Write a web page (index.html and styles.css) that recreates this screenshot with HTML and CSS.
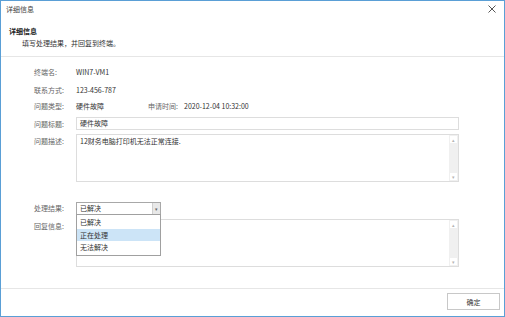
FILE: index.html
```html
<!DOCTYPE html>
<html lang="zh-CN">
<head>
    <meta charset="UTF-8">
    <title>详细信息</title>
    <link rel="stylesheet" href="styles.css">
</head>
<body>
    <div class="window">
        <div class="title-bar">
            <span class="title-text">详细信息</span>
            <svg class="close-icon" width="8" height="8" viewBox="0 0 8 8" fill="none" stroke="#555" stroke-width="1">
                <path d="M0.5 0.5L7.5 7.5M7.5 0.5L0.5 7.5"/>
            </svg>
        </div>

        <div class="header">
            <div class="header-title">详细信息</div>
            <div class="header-sub">填写处理结果，并回复到终端。</div>
        </div>

        <div class="form">
            <div class="row row-1">
                <span class="label">终端名:</span>
                <span class="value">WIN7-VM1</span>
            </div>
            <div class="row row-2">
                <span class="label">联系方式:</span>
                <span class="value">123-456-787</span>
            </div>
            <div class="row row-3">
                <span class="label">问题类型:</span>
                <span class="value value-short">硬件故障</span>
                <span class="label label-short">申请时间:</span>
                <span class="value">2020-12-04 10:32:00</span>
            </div>
            <div class="row row-4">
                <span class="label">问题标题:</span>
                <div class="input">硬件故障</div>
            </div>
            <div class="row row-5 row-top">
                <span class="label">问题描述:</span>
                <div class="textarea">
                    <div class="textarea-text">12财务电脑打印机无法正常连接.</div>
                    <div class="scrollbar">
                        <span class="scroll-btn">▴</span>
                        <span class="scroll-btn">▾</span>
                    </div>
                </div>
            </div>
            <div class="row row-6">
                <span class="label">处理结果:</span>
                <div class="select">
                    <span class="select-value">已解决</span>
                    <span class="select-arrow">▾</span>
                    <ul class="dropdown">
                        <li>已解决</li>
                        <li class="active">正在处理</li>
                        <li>无法解决</li>
                    </ul>
                </div>
            </div>
            <div class="row row-7 row-top">
                <span class="label">回复信息:</span>
                <div class="textarea">
                    <div class="textarea-text"></div>
                    <div class="scrollbar">
                        <span class="scroll-btn">▴</span>
                        <span class="scroll-btn">▾</span>
                    </div>
                </div>
            </div>
        </div>

        <div class="footer">
            <button class="btn">确定</button>
        </div>
    </div>
</body>
</html>
```

FILE: styles.css
```css
:root {
    --border-blue: #5a9fd6;
    --line-color: #e6e6e6;
    --label-color: #666666;
    --text-color: #333333;
    --input-border: #dddddd;
}

* {
    box-sizing: border-box;
}

body {
    margin: 0;
    padding: 0;
    background: #ffffff;
    font-family: "Noto Sans CJK SC", "Liberation Sans", sans-serif;
    font-size: 7px;
    color: var(--text-color);
}

.window {
    width: 505px;
    height: 317px;
    border: 1px solid var(--border-blue);
    display: flex;
    flex-direction: column;
    background: #ffffff;
}

.title-bar {
    height: 16px;
    display: flex;
    align-items: center;
    justify-content: space-between;
    padding: 0 8px 0 5px;
    color: #444444;
}

.header {
    padding: 8px 0 0 8px;
    height: 40px;
    border-bottom: 1px solid var(--line-color);
}

.header-title {
    font-weight: bold;
    line-height: 12px;
    color: #222222;
}

.header-sub {
    padding-left: 13px;
    line-height: 12px;
    color: var(--text-color);
}

.form {
    flex: 1;
    padding: 9px 45px 0 33px;
}

.row {
    display: flex;
    align-items: center;
    height: 12px;
    line-height: 12px;
}

.row-top {
    align-items: flex-start;
}

.row-2 { margin-top: 6px; }
.row-3 { margin-top: 4px; }
.row-4 { margin-top: 5px; height: 13px; }
.row-5 { margin-top: 4px; height: 48px; }
.row-6 { margin-top: 20px; height: 12px; }
.row-7 { margin-top: 5px; height: 48px; }

.label {
    width: 42px;
    flex-shrink: 0;
    color: var(--label-color);
}

.row-top .label {
    padding-top: 1px;
}

.label-short {
    width: 36px;
}

.value {
    color: var(--text-color);
}

.value-short {
    width: 72px;
}

.input {
    flex: 1;
    height: 13px;
    border: 1px solid var(--input-border);
    padding-left: 3px;
    line-height: 11px;
}

.textarea {
    flex: 1;
    height: 48px;
    border: 1px solid var(--input-border);
    display: flex;
}

.textarea-text {
    flex: 1;
    padding: 1px 3px;
    line-height: 11px;
}

.scrollbar {
    width: 9px;
    background: #f0f0f0;
    display: flex;
    flex-direction: column;
    justify-content: space-between;
    align-items: center;
    padding: 1px 0;
}

.scroll-btn {
    width: 7px;
    height: 7px;
    background: #ffffff;
    color: #b5b5b5;
    font-size: 5px;
    line-height: 7px;
    text-align: center;
}

.select {
    position: relative;
    width: 85px;
    height: 13px;
    border: 1px solid #a8a8a8;
    display: flex;
    align-items: center;
    margin-top: 1px;
}

.select-value {
    flex: 1;
    padding-left: 3px;
    line-height: 11px;
}

.select-arrow {
    width: 8px;
    height: 11px;
    background: #e8e8e8;
    border-left: 1px solid #cfcfcf;
    color: #666666;
    font-size: 5px;
    line-height: 11px;
    text-align: center;
}

.dropdown {
    position: absolute;
    top: 11px;
    left: -1px;
    width: 85px;
    margin: 0;
    padding: 1px 0;
    list-style: none;
    background: #ffffff;
    border: 1px solid #a0a0a0;
    z-index: 2;
}

.dropdown li {
    height: 12.5px;
    line-height: 12.5px;
    padding-left: 3px;
    color: var(--text-color);
}

.dropdown li.active {
    background: #cce4f7;
}

.footer {
    height: 28px;
    border-top: 1px solid var(--line-color);
    display: flex;
    justify-content: flex-end;
    align-items: flex-start;
    padding: 4px 4px 0 0;
}

.btn {
    width: 53px;
    height: 17px;
    border: 1px solid #c8c8c8;
    background: #ffffff;
    font-family: inherit;
    font-size: 7px;
    color: var(--text-color);
    padding: 0;
}
```
